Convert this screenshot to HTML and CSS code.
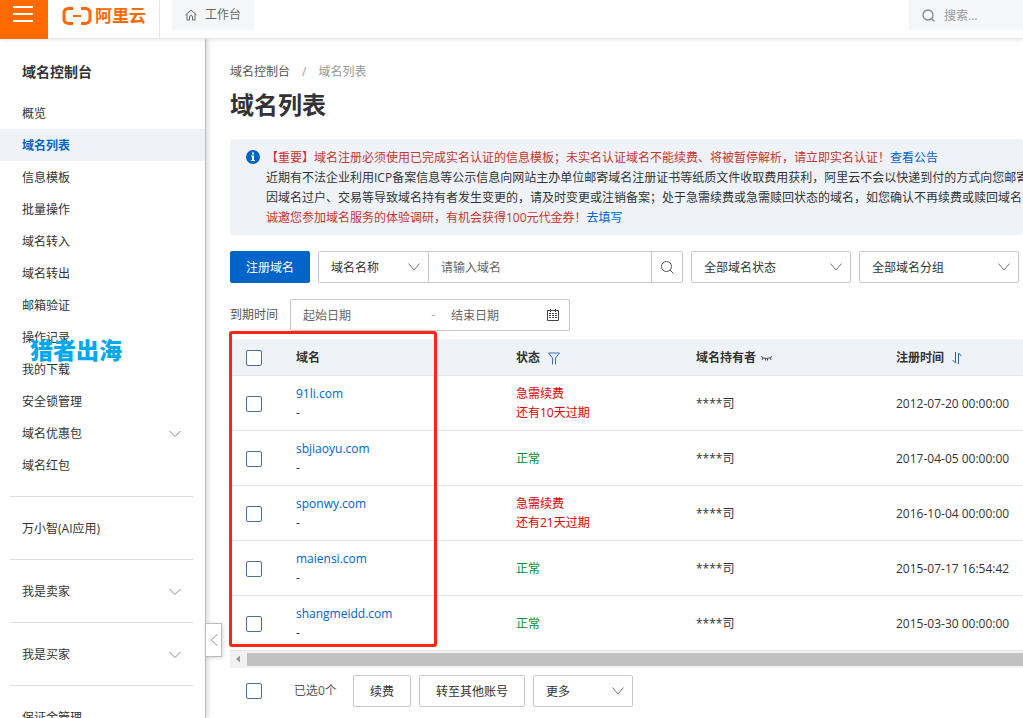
FILE: index.html
```html
<!DOCTYPE html>
<html lang="zh-CN">
<head>
    <meta charset="UTF-8">
    <meta name="viewport" content="width=device-width, initial-scale=1.0">
    <title>域名列表</title>
    <link rel="stylesheet" href="styles.css">
</head>
<body>

<header class="topbar">
    <button type="button" class="menu-btn" aria-label="菜单">
        <svg width="20" height="16" viewBox="0 0 20 16" fill="none" stroke="#fff" stroke-width="2"><path d="M0 1h20M0 8h20M0 15h20"/></svg>
    </button>
    <a href="#" class="logo">
        <svg width="30" height="18" viewBox="0 0 30 18" fill="none" stroke="#ff6a00">
            <path stroke-width="3" d="M11 1.500H6.500Q2 2 2 6v6q0 4 4.500 4.500H11M19 1.500h4.500Q28 2 28 6v6q0 4-4.500 4.500H19"/>
            <path stroke-width="2" d="M11 9h8"/>
        </svg>
        <span>阿里云</span>
    </a>
    <a href="#" class="workbench">
        <svg width="12" height="12" viewBox="0 0 12 12" fill="none" stroke="#666"><path d="M.5 6 6 1l5.500 5M2 5v6h2.500V8Q4.500 6.500 6 6.500T7.500 8v3H10V5"/></svg>
        工作台
    </a>
    <label class="top-search">
        <svg width="13" height="13" viewBox="0 0 13 13" fill="none" stroke="#888" stroke-width="1.300"><circle cx="6" cy="6" r="5"/><path d="m9.500 9.500 3 3"/></svg>
        <input type="text" placeholder="搜索..." aria-label="搜索">
    </label>
</header>

<div class="layout">
    <!-- 左侧导航 -->
    <aside class="sidebar">
        <h2>域名控制台</h2>
        <nav>
            <a href="#">概览</a>
            <a href="#" class="active">域名列表</a>
            <a href="#">信息模板</a>
            <a href="#">批量操作</a>
            <a href="#">域名转入</a>
            <a href="#">域名转出</a>
            <a href="#">邮箱验证</a>
            <a href="#">操作记录</a>
            <a href="#">我的下载</a>
            <a href="#">安全锁管理</a>
            <a href="#">域名优惠包 <svg class="arrow" width="12" height="8" viewBox="0 0 12 8"><path d="m.5 1 5.500 5.500L11.500 1"/></svg></a>
            <a href="#">域名红包</a>
        </nav>
        <div class="nav-group"><a href="#">万小智(AI应用)</a></div>
        <div class="nav-group"><a href="#">我是卖家 <svg class="arrow" width="12" height="8" viewBox="0 0 12 8"><path d="m.5 1 5.500 5.500L11.500 1"/></svg></a></div>
        <div class="nav-group"><a href="#">我是买家 <svg class="arrow" width="12" height="8" viewBox="0 0 12 8"><path d="m.5 1 5.500 5.500L11.500 1"/></svg></a></div>
        <div class="nav-group"><a href="#">保证金管理</a></div>

        <span class="watermark">猎者出海</span>
        <button type="button" class="collapse-btn" aria-label="收起">
            <svg width="8" height="12" viewBox="0 0 8 12" fill="none" stroke="#999"><path d="M7.500.5 1 6l6.500 5.500"/></svg>
        </button>
    </aside>

    <main class="main">
        <div class="breadcrumb"><a href="#">域名控制台</a><i>/</i><span>域名列表</span></div>
        <h1>域名列表</h1>

        <div class="notice">
            <svg width="14" height="14" viewBox="0 0 14 14"><circle cx="7" cy="7" r="7" fill="#0064c8"/><path fill="#fff" d="M6 2.500h2v2H6zM5 5.500h3v4.500h1v1H5v-1h1V6.500H5z"/></svg>
            <div>
                <p class="warn">【重要】域名注册必须使用已完成实名认证的信息模板；未实名认证域名不能续费、将被暂停解析，请立即实名认证！<a href="#">查看公告</a></p>
                <p>近期有不法企业利用ICP备案信息等公示信息向网站主办单位邮寄域名注册证书等纸质文件收取费用获利，阿里云不会以快递到付的方式向您邮寄</p>
                <p>因域名过户、交易等导致域名持有者发生变更的，请及时变更或注销备案；处于急需续费或急需赎回状态的域名，如您确认不再续费或赎回域名</p>
                <p class="warn">诚邀您参加域名服务的体验调研，有机会获得100元代金券！<a href="#">去填写</a></p>
            </div>
        </div>

        <!-- 筛选条件 -->
        <form class="filters">
            <button type="button" class="btn primary">注册域名</button>
            <div class="search-group">
                <select aria-label="搜索类型"><option>域名名称</option></select>
                <input type="text" placeholder="请输入域名" aria-label="域名">
                <button type="button" aria-label="搜索">
                    <svg width="13" height="13" viewBox="0 0 13 13" fill="none" stroke="#555"><circle cx="5.500" cy="5.500" r="5"/><path d="m9 9 3.500 3.500"/></svg>
                </button>
            </div>
            <select class="filter-select" aria-label="域名状态"><option>全部域名状态</option></select>
            <select class="filter-select" aria-label="域名分组"><option>全部域名分组</option></select>
        </form>
        <div class="date-row">
            <label for="startDate">到期时间</label>
            <div class="date-range">
                <input type="text" id="startDate" placeholder="起始日期">
                <span>-</span>
                <input type="text" class="end-date" placeholder="结束日期" aria-label="结束日期">
                <svg width="12" height="12" viewBox="0 0 12 12" fill="none" stroke="#444"><path d="M.5 1.500h11v10H.5zM3.500 0v3M8.500 0v3"/><path stroke-dasharray="2 1" d="M2 4.500h8M2 6.500h8M2 8.500h8"/></svg>
            </div>
        </div>

        <div class="table-wrap">
            <table>
                <thead>
                    <tr>
                        <th class="col-check"><input type="checkbox" aria-label="全选"></th>
                        <th class="col-name">域名</th>
                        <th class="col-status">状态 <svg class="ico-filter" width="12" height="13" viewBox="0 0 12 13" fill="none" stroke="#3c6fd0"><path d="M.5 1h11L7.500 6v6.500M.5 1l4 5v6.500"/></svg></th>
                        <th class="col-owner">域名持有者 <svg class="ico-eye" width="11" height="5" viewBox="0 0 11 5" fill="none" stroke="#444"><path d="M0 .5q5.500 4 11 0M2 2 1 4M4.500 2.500v2M6.500 2.500v2M9 2l1 2"/></svg></th>
                        <th>注册时间 <svg class="ico-sort" width="10" height="12" viewBox="0 0 10 12" fill="none" stroke="#2f5f9e"><path d="M3.500 0v11L.5 8M6.500 12V1l3 3"/></svg></th>
                    </tr>
                </thead>
                <tbody>
                    <tr>
                        <td><input type="checkbox" aria-label="91li.com"></td>
                        <td><a href="#">91li.com</a><br>-</td>
                        <td class="danger">急需续费<br>还有10天过期</td>
                        <td>****司</td>
                        <td>2012-07-20 00:00:00</td>
                    </tr>
                    <tr>
                        <td><input type="checkbox" aria-label="sbjiaoyu.com"></td>
                        <td><a href="#">sbjiaoyu.com</a><br>-</td>
                        <td class="ok">正常</td>
                        <td>****司</td>
                        <td>2017-04-05 00:00:00</td>
                    </tr>
                    <tr>
                        <td><input type="checkbox" aria-label="sponwy.com"></td>
                        <td><a href="#">sponwy.com</a><br>-</td>
                        <td class="danger">急需续费<br>还有21天过期</td>
                        <td>****司</td>
                        <td>2016-10-04 00:00:00</td>
                    </tr>
                    <tr>
                        <td><input type="checkbox" aria-label="maiensi.com"></td>
                        <td><a href="#">maiensi.com</a><br>-</td>
                        <td class="ok">正常</td>
                        <td>****司</td>
                        <td>2015-07-17 16:54:42</td>
                    </tr>
                    <tr>
                        <td><input type="checkbox" aria-label="shangmeidd.com"></td>
                        <td><a href="#">shangmeidd.com</a><br>-</td>
                        <td class="ok">正常</td>
                        <td>****司</td>
                        <td>2015-03-30 00:00:00</td>
                    </tr>
                </tbody>
            </table>
            <div class="highlight"></div>
        </div>
        <div class="scrollbar">
            <svg width="17" height="16" viewBox="0 0 17 16"><path fill="#999" d="M10 4.500v7L6 8z"/></svg>
            <div class="thumb"></div>
        </div>

        <div class="batch">
            <input type="checkbox" id="checkAll">
            <label for="checkAll">已选0个</label>
            <button type="button" class="btn">续费</button>
            <button type="button" class="btn">转至其他账号</button>
            <select aria-label="更多"><option>更多</option></select>
        </div>
    </main>
</div>

</body>
</html>
```
FILE: styles.css
```css
* { box-sizing: border-box; }
body { margin: 0; height: 100vh; overflow: hidden; display: flex; flex-direction: column; background: #fff; color: #333; font-size: 12px; line-height: 20px; }
body, input, select, button { font-family: "Open Sans", "Noto Sans CJK SC", sans-serif; }
input, select, button { font-size: 12px; color: #333; }
h1, h2, p { margin: 0; }
a { color: #0064c8; text-decoration: none; }
button { cursor: pointer; }
svg { flex: none; }
::placeholder { color: #666; opacity: 1; }

/* 顶部 */
.topbar { position: relative; z-index: 2; flex: none; display: flex; align-items: flex-start; height: 39px; background: #fff; border-bottom: 1px solid #e6e6e6; box-shadow: 0 1px 4px rgba(0, 0, 0, .1); }
.menu-btn { display: flex; justify-content: center; width: 48px; height: 39px; padding: 6px 2px 0 0; border: none; background: #ff6a00; }
.logo { display: flex; align-items: center; gap: 3px; width: 112px; height: 38px; padding: 0 0 6px 14px; border-right: 1px solid #e6e6e6; color: #ff6a00; font-size: 17px; font-weight: 700; }
.logo span { white-space: nowrap; }
.workbench { display: flex; align-items: center; gap: 8px; height: 30px; margin-left: 12px; padding: 0 13px; background: #f5f6f8; color: #666; }
.top-search { display: flex; align-items: center; gap: 9px; width: 114px; height: 30px; margin-left: auto; padding-left: 13px; background: #f5f6f8; }
.top-search input { flex: 1; min-width: 0; border: none; padding: 0; background: none; }
.top-search input::placeholder { color: #999; }

/* 左侧导航 */
.layout { flex: 1; min-height: 0; display: flex; }
.sidebar { position: relative; flex: none; width: 206px; border-right: 1px solid #bbb; box-shadow: 2px 0 5px rgba(0, 0, 0, .15); }
.sidebar h2 { padding: 23px 22px 15px; font-size: 14px; line-height: 20px; }
.sidebar a { display: flex; align-items: center; justify-content: space-between; height: 32px; padding: 2px 24px 0 22px; color: #333; }
.sidebar a.active { background: #eff3f8; color: #0064c8; font-weight: 700; }
.arrow { fill: none; stroke: #888; }
.nav-group { margin: 0 12px 0 10px; padding: 15px 0; border-top: 1px solid #dedede; }
.nav-group a { padding: 2px 12px 0; }
nav { padding-bottom: 15px; }
.watermark { position: absolute; left: 30px; top: 299px; color: #00a8f0; font-size: 23px; font-weight: 900; line-height: 24px; }
.collapse-btn { position: absolute; left: 205px; top: 584px; z-index: 1; display: flex; align-items: center; justify-content: center; width: 17px; height: 34px; padding: 0; border: 1px solid #bbb; background: #fff; box-shadow: 1px 1px 4px rgba(0, 0, 0, .15); }

/* 主体 */
.main { flex: 1; min-width: 0; padding: 23px 0 0 24px; }
.breadcrumb { color: #999; }
.breadcrumb a { color: #555; }
.breadcrumb i { margin: 0 12px; font-style: normal; }
h1 { margin: 6px 0 17px; font-size: 24px; line-height: 34px; }
.notice { display: flex; gap: 6px; padding: 9px 0 7px 16px; border-radius: 2px; background: #eff3f8; white-space: nowrap; overflow: hidden; }
.notice svg { margin-top: 2px; }
.warn { color: #c8352b; }

.btn { height: 32px; padding: 0 16px; border: 1px solid #c4c6cf; border-radius: 2px; background: #fff; }
.primary { width: 80px; padding: 0; border-color: #0064c8; background: #0064c8; color: #fff; }
select { height: 32px; padding: 0 32px 0 12px; border: 1px solid #c4c6cf; border-radius: 2px; appearance: none; background: #fff url("data:image/svg+xml,%3Csvg xmlns='http://www.w3.org/2000/svg' width='12' height='8' fill='none' stroke='%23777'%3E%3Cpath d='M.5.5 6 7 11.500.5'/%3E%3C/svg%3E") no-repeat right 8px center; }
.filters { display: flex; gap: 8px; margin: 16px 4px 16px 0; }
.filter-select { width: 160px; }
.search-group { flex: 1; min-width: 0; display: flex; border: 1px solid #c4c6cf; border-radius: 2px; }
.search-group select { width: 110px; height: 30px; border: none; border-right: 1px solid #c4c6cf; }
.search-group input { flex: 1; min-width: 0; padding: 0 12px; border: none; }
.search-group button { display: flex; align-items: center; justify-content: center; width: 31px; padding: 0; border: none; border-left: 1px solid #c4c6cf; background: #fff; }
.date-row { display: flex; align-items: center; gap: 12px; color: #555; }
.date-range { display: flex; align-items: center; width: 280px; height: 32px; padding: 0 10px 0 12px; border: 1px solid #c4c6cf; border-radius: 2px; }
.date-range input { flex: 1; min-width: 0; border: none; padding: 0; }
.date-range .end-date { flex: none; width: 96px; }
.date-range span { padding: 0 16px 0 12px; color: #aaa; }

/* 域名表格 */
.table-wrap { position: relative; margin-top: 8px; }
table { width: 100%; table-layout: fixed; border-collapse: separate; border-spacing: 0; line-height: 19px; }
th, td { padding: 0 0 0 16px; border-bottom: 1px solid #e3e4e6; text-align: left; white-space: nowrap; }
th { height: 37px; background: #eff3f8; font-weight: 700; }
td { height: 55px; }
th:first-child, td:first-child { padding-top: 2px; }
th svg { vertical-align: middle; }
.col-check { width: 50px; }
.col-name { width: 220px; }
.col-status { width: 180px; }
.col-owner { width: 200px; }
.ico-filter, .ico-sort { margin-left: 5px; }
.ico-eye { margin-left: 2px; }
.danger { color: #d00; }
.ok { color: #00902f; }
input[type="checkbox"] { appearance: none; display: block; width: 16px; height: 16px; margin: 0; border: 1px solid #4f6f9b; border-radius: 2px; background: #fff; }
.highlight { position: absolute; left: -1px; top: -8px; width: 208px; height: 316px; border: 3px solid #ff2519; border-radius: 3px; pointer-events: none; }
.scrollbar { display: flex; height: 17px; background: #f1f1f1; }
.thumb { flex: 1; margin: 2px 0; background: #c1c1c1; }

.batch { display: flex; align-items: center; gap: 8px; padding: 7px 16px; }
.batch label { margin: 0 8px 0 24px; color: #555; }
.batch select { width: 100px; }
```
